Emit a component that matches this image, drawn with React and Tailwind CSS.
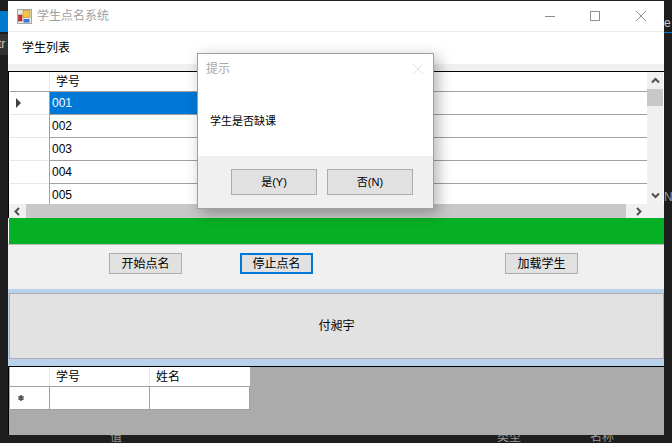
import React from 'react';

const font = { fontFamily: '"Liberation Sans", "Noto Sans CJK SC", sans-serif' };

const rows = ['001', '002', '003', '004', '005'];

// App icon in the title bar
const AppIcon = () => (
  <svg width="15" height="15" viewBox="0 0 15 15" className="shrink-0">
    <rect x="0.5" y="0.5" width="14" height="14" fill="#e8e8e8" stroke="#a8a8a8" />
    <rect x="6" y="1.5" width="7" height="7" fill="#f5c542" stroke="#b8862a" strokeWidth="0.6" />
    <rect x="1.5" y="6" width="3.5" height="6" fill="#d92b2b" stroke="#8a2020" strokeWidth="0.5" />
    <rect x="6.5" y="10" width="6" height="3.5" fill="#3a78d8" />
  </svg>
);

const CloseIcon = ({ color = '#8f8f8f' }) => (
  <svg width="10" height="10" viewBox="0 0 10 10" className="shrink-0">
    <path d="M0 0 L10 10 M10 0 L0 10" stroke={color} strokeWidth="1" fill="none" />
  </svg>
);

const Chevron = ({ d }) => (
  <svg width="9" height="9" viewBox="0 0 9 9">
    <path d={d} stroke="#505050" strokeWidth="2" fill="none" />
  </svg>
);

const Button = ({ children, focused, className = '' }) => (
  <button
    className={`w-[73px] h-[21px] bg-[#e1e1e1] text-[12px] text-black flex items-center justify-center ${
      focused ? 'border-2 border-[#0078d7]' : 'border border-[#adadad]'
    } ${className}`}
  >
    {children}
  </button>
);

const DialogButton = ({ children }) => (
  <button className="w-[86px] h-[26px] bg-[#e1e1e1] border border-[#adadad] text-[11px] text-black flex items-center justify-center">
    {children}
  </button>
);

const Row = ({ id, selected }) => (
  <div className="flex h-[23px] border-b border-[#a0a0a0] shrink-0">
    <div className="w-[39px] shrink-0 border-b border-[#e8e8e8] -mb-px flex items-center pl-[5px]">
      {selected && (
        <svg width="7" height="10" viewBox="0 0 7 10">
          <path d="M1 0 L6 5 L1 10 Z" fill="#404040" />
        </svg>
      )}
    </div>
    <div className="w-px bg-[#a0a0a0] shrink-0" />
    <div
      className={`w-[160px] text-[12px] pl-[2px] flex items-center ${
        selected ? 'bg-[#0078d7] text-white' : 'text-black'
      }`}
    >
      {id}
    </div>
  </div>
);

export default function App() {
  return (
    <div className="relative w-[672px] h-[443px] overflow-hidden bg-[#1e1e1e]" style={font}>
      {/* Editor behind the window */}
      <div className="absolute left-0 top-[11px] w-2 h-[21px] bg-[#007acc]" />
      <div className="absolute left-0 top-[34px] w-2 h-[21px] bg-[#333337] text-[#cccccc] text-[12px] leading-[21px] overflow-hidden">
        <span className="ml-[-2px]">tr</span>
      </div>
      <div className="absolute left-[664px] top-[14px] text-[#cccccc] text-[12px] leading-[18px]">e</div>
      <div className="absolute left-[664px] top-[32px] w-2 h-px bg-[#007acc]" />
      <div className="absolute left-[664px] top-[188px] text-[#999999] text-[12px] leading-[18px]">N</div>
      <div className="absolute left-[110px] top-[431px] text-[#999999] text-[12px] leading-[13px]">值</div>
      <div className="absolute left-[497px] top-[431px] text-[#999999] text-[12px] leading-[13px]">类型</div>
      <div className="absolute left-[590px] top-[431px] text-[#999999] text-[12px] leading-[13px]">名称</div>

      <div className="absolute left-2 top-px w-[656px] h-[434px] bg-white flex flex-col">
        {/* Title bar */}
        <div className="h-[31px] shrink-0 flex items-center pl-[9px] border-b border-[#ededed]">
          <AppIcon />
          <span className="ml-[5px] text-[12px] text-[#a0a0a0]">学生点名系统</span>
          <div className="ml-auto flex items-center">
            <div className="w-[10px] h-px bg-[#8f8f8f]" />
            <div className="ml-[35px] w-[10px] h-[10px] border border-[#8f8f8f]" />
            <div className="ml-[36px] mr-[18px]">
              <CloseIcon />
            </div>
          </div>
        </div>

        {/* Menu */}
        <div className="h-[32px] shrink-0 pl-[14px] flex items-center text-[12px] text-black">学生列表</div>
        <div className="h-[7px] shrink-0 bg-[#f0f0f0]" />

        {/* Student grid */}
        <div className="h-[147px] shrink-0 border-t border-l border-black flex flex-col">
          <div className="flex-1 flex min-h-0 ml-px">
            <div className="flex-1 min-w-0 overflow-hidden flex flex-col">
              <div className="flex h-[20px] border-b border-[#a0a0a0] shrink-0">
                <div className="w-[39px] shrink-0" />
                <div className="w-px bg-[#e8e8e8] shrink-0" />
                <div className="pl-[6px] text-[12px] text-black flex items-center">学号</div>
              </div>
              {rows.map((id, i) => (
                <Row key={id} id={id} selected={i === 0} />
              ))}
            </div>
            {/* Vertical scrollbar */}
            <div className="w-[16px] shrink-0 bg-[#f0f0f0] flex flex-col mr-px">
              <div className="h-[17px] flex items-center justify-center">
                <Chevron d="M1 6.5 L4.5 3 L8 6.5" />
              </div>
              <div className="h-[17px] bg-[#c8c8c8]" />
              <div className="mt-auto h-[17px] flex items-center justify-center">
                <Chevron d="M1 2.5 L4.5 6 L8 2.5" />
              </div>
            </div>
          </div>
          {/* Horizontal scrollbar */}
          <div className="h-[14px] shrink-0 flex bg-[#f0f0f0]">
            <div className="w-[17px] flex items-center justify-center">
              <Chevron d="M6 1 L2.5 4.5 L6 8" />
            </div>
            <div className="w-[600px] bg-[#c8c8c8]" />
            <div className="w-[21px] flex items-center justify-center pl-[4px]">
              <Chevron d="M3 1 L6.5 4.5 L3 8" />
            </div>
          </div>
        </div>

        {/* Progress bar */}
        <div className="h-[26px] shrink-0 ml-px bg-[#06b025]" />

        {/* Action buttons */}
        <div className="h-[45px] shrink-0 bg-[#f0f0f0] border-t border-[#bcbcbc] pt-2 pl-[101px] flex items-start">
          <Button>开始点名</Button>
          <Button focused className="ml-[58px]">停止点名</Button>
          <Button className="ml-[192px]">加载学生</Button>
        </div>

        {/* Current student */}
        <div className="h-[77px] shrink-0 bg-[#b9d1ea] pt-[4px] pb-[7px] pl-px">
          <div className="h-full bg-[#e2e2e2] border border-[#adadad] flex items-center justify-center text-[12px] text-black">
            付昶宇
          </div>
        </div>

        {/* Attendance grid */}
        <div className="flex-1 min-h-0 bg-[#ababab] border-t border-l border-black pl-px">
          <div className="w-[240px] bg-white">
            <div className="flex h-[20px] text-[12px] text-black border-b border-[#a0a0a0]">
              <div className="w-[40px] border-r border-[#e8e8e8]" />
              <div className="w-[100px] pl-[6px] border-r border-[#e8e8e8] flex items-center">学号</div>
              <div className="w-[100px] pl-[6px] flex items-center">姓名</div>
            </div>
            <div className="flex h-[23px] border-b border-[#a0a0a0]">
              <div className="w-[40px] border-r border-[#a0a0a0] flex items-center pl-[8px]">
                <svg width="6" height="6" viewBox="0 0 6 6">
                  <path d="M3 0 V6 M0.4 1.5 L5.6 4.5 M5.6 1.5 L0.4 4.5" stroke="#555555" strokeWidth="1.6" />
                </svg>
              </div>
              <div className="w-[100px] border-r border-[#a0a0a0]" />
              <div className="w-[100px] border-r border-[#a0a0a0]" />
            </div>
          </div>
        </div>
      </div>

      {/* Message box */}
      <div className="absolute left-[197px] top-[53px] w-[237px] h-[156px] bg-white border border-[#a0a0a0] shadow-[4px_4px_14px_rgba(0,0,0,0.3)] flex flex-col">
        <div className="h-[29px] shrink-0 flex items-center justify-between pl-2 pr-[10px] text-[12px] text-[#a8a8a8]">
          <span>提示</span>
          <CloseIcon color="#e4e4e4" />
        </div>
        <div className="flex-1 pl-3 flex items-start pt-[30px] text-[11px] text-black">学生是否缺课</div>
        <div className="h-[52px] shrink-0 bg-[#f0f0f0] flex items-start pt-[13px] pl-[33px] gap-[10px]">
          <DialogButton>是(Y)</DialogButton>
          <DialogButton>否(N)</DialogButton>
        </div>
      </div>
    </div>
  );
}
